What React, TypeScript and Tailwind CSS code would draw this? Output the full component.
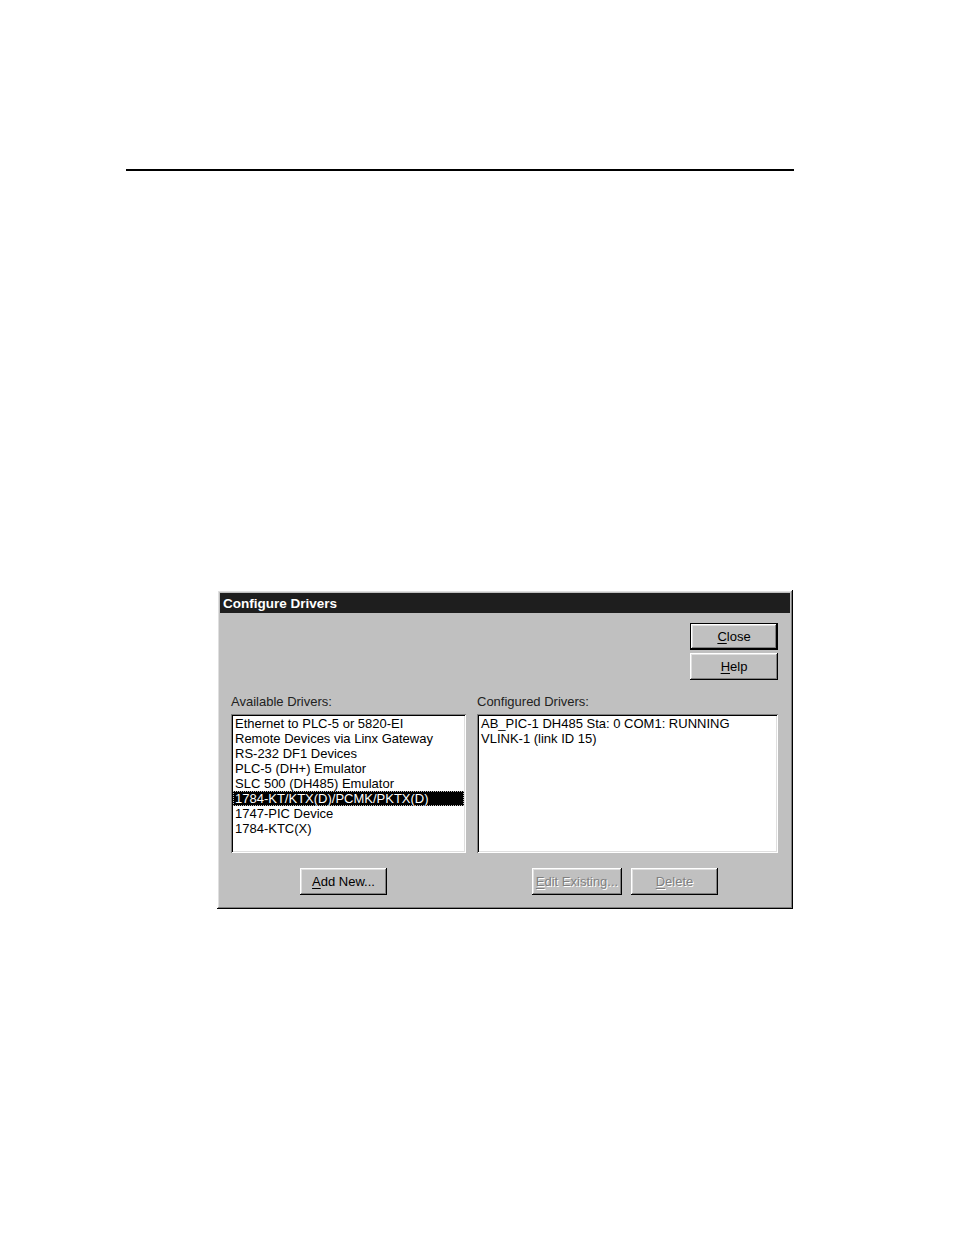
const available = [
  "Ethernet to PLC-5 or 5820-EI",
  "Remote Devices via Linx Gateway",
  "RS-232 DF1 Devices",
  "PLC-5 (DH+) Emulator",
  "SLC 500 (DH485) Emulator",
  "1784-KT/KTX(D)/PCMK/PKTX(D)",
  "1747-PIC Device",
  "1784-KTC(X)",
];

const configured = ["AB_PIC-1 DH485 Sta: 0 COM1: RUNNING", "VLINK-1 (link ID 15)"];

const raised =
  "bg-[#c0c0c0] shadow-[inset_-1px_-1px_#000,inset_1px_1px_#fff,inset_-2px_-2px_#808080,inset_2px_2px_#dfdfdf]";
const sunken =
  "bg-white shadow-[inset_1px_1px_#808080,inset_-1px_-1px_#fff,inset_2px_2px_#000,inset_-2px_-2px_#dfdfdf]";

function Button({
  label,
  hotkey,
  width,
  disabled,
  isDefault,
}: {
  label: string;
  hotkey: number;
  width: string;
  disabled?: boolean;
  isDefault?: boolean;
}) {
  const text = (
    <span
      className={
        disabled ? "text-[#808080] [text-shadow:1px_1px_#fff]" : "text-black"
      }
    >
      {label.slice(0, hotkey)}
      <span className="underline underline-offset-2">{label[hotkey]}</span>
      {label.slice(hotkey + 1)}
    </span>
  );
  if (isDefault) {
    return (
      <div className={`${width} h-[27px] border border-black`}>
        <div className={`${raised} flex h-full w-full items-center justify-center`}>{text}</div>
      </div>
    );
  }
  return (
    <div className={`${raised} ${width} flex h-[27px] items-center justify-center`}>{text}</div>
  );
}

export default function App() {
  return (
    <div className="relative h-[1235px] w-[954px] overflow-hidden bg-white pt-[169px] font-['Liberation_Sans',Arial,sans-serif] text-[13px] leading-[15px]">
      <div className="ml-[126px] h-[2px] w-[668px] bg-black" />

      <div className={`${raised} ml-[217px] mt-[419px] flex h-[319px] w-[576px] flex-col p-[3px]`}>
        <div className="flex h-[20px] items-center bg-[#1e1e1e] px-[3px] text-[13.5px] font-bold text-white">
          Configure Drivers
        </div>

        <div className="flex flex-col items-end pr-[12px] pt-[10px]">
          <div className="flex flex-col gap-[3px]">
            <Button label="Close" hotkey={0} width="w-[88px]" isDefault />
            <Button label="Help" hotkey={0} width="w-[88px]" />
          </div>
        </div>

        <div className="mt-[14px] flex gap-[11px] pl-[11px]">
          <div className="w-[235px] text-[#222]">Available Drivers:</div>
          <div className="w-[301px] text-[#222]">Configured Drivers:</div>
        </div>

        <div className="mt-[5px] flex gap-[11px] pl-[11px]">
          <div className={`${sunken} h-[139px] w-[235px] px-[2px] pt-[2px]`}>
            {available.map((item, i) =>
              i === 5 ? (
                <div
                  key={item}
                  className="h-[15px] bg-black px-[2px] text-white outline-1 -outline-offset-1 outline-dotted outline-[#c0c0c0]"
                >
                  {item}
                </div>
              ) : (
                <div key={item} className="h-[15px] px-[2px] text-black">
                  {item}
                </div>
              )
            )}
          </div>
          <div className={`${sunken} h-[139px] w-[301px] px-[2px] pt-[2px]`}>
            {configured.map((item) => (
              <div key={item} className="h-[15px] px-[2px] text-black">
                {item}
              </div>
            ))}
          </div>
        </div>

        <div className="mt-[15px] flex">
          <div className="ml-[80px]">
            <Button label="Add New..." hotkey={0} width="w-[87px]" />
          </div>
          <div className="ml-[145px] flex gap-[9px]">
            <Button label="Edit Existing..." hotkey={0} width="w-[90px]" disabled />
            <Button label="Delete" hotkey={0} width="w-[87px]" disabled />
          </div>
        </div>
      </div>
    </div>
  );
}
